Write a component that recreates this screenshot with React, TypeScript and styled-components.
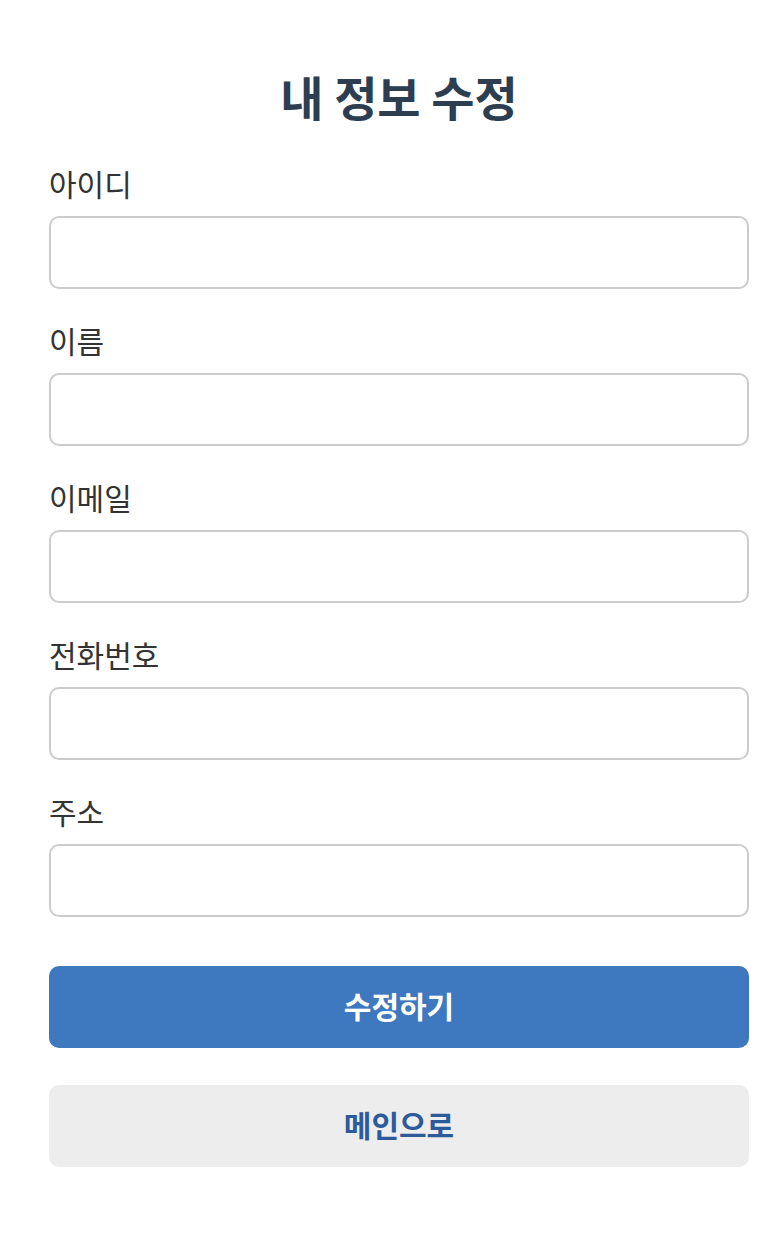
import { FC } from 'react';
import styled, { createGlobalStyle } from 'styled-components';

const GlobalStyle = createGlobalStyle`
  body {
    margin: 0;
    background: #fff;
    font-family: 'Noto Sans CJK KR', 'Noto Sans', sans-serif;
  }
`;

const Page = styled.div`
  padding: 66px 35px 60px 49px;
`;

const Form = styled.form`
  width: 700px;
  display: flex;
  flex-direction: column;
`;

const Title = styled.h1`
  margin: 0 0 38px;
  text-align: center;
  font-size: 47px;
  line-height: 60px;
  font-weight: 700;
  color: #2c3e50;
`;

const Field = styled.div`
  display: flex;
  flex-direction: column;
  gap: 14px;
  margin-bottom: 32px;
`;

const Label = styled.label`
  font-size: 30px;
  line-height: 38px;
  color: #333;
`;

const Input = styled.input`
  box-sizing: border-box;
  height: 73px;
  width: 100%;
  border: 2px solid #ccc;
  border-radius: 10px;
  padding: 0 16px;
  font-size: 28px;
  font-family: inherit;
  outline: none;
`;

const Button = styled.button<{ $primary?: boolean }>`
  height: 82px;
  width: 100%;
  padding: 0 0 5px;
  border: none;
  border-radius: 10px;
  font-family: inherit;
  font-size: 30px;
  font-weight: 700;
  cursor: pointer;
  background: ${({ $primary }) => ($primary ? '#3e78be' : '#ededed')};
  color: ${({ $primary }) => ($primary ? '#fff' : '#2c5a9a')};
  margin-top: ${({ $primary }) => ($primary ? '17px' : '37px')};
`;

const fields = [
  { id: 'userId', label: '아이디' },
  { id: 'name', label: '이름' },
  { id: 'email', label: '이메일' },
  { id: 'phone', label: '전화번호' },
  { id: 'address', label: '주소' },
];

const App: FC = () => {
  return (
    <>
      <GlobalStyle />
      <Page>
        <Form onSubmit={(e) => e.preventDefault()}>
          <Title>내 정보 수정</Title>
          {fields.map((field) => (
            <Field key={field.id}>
              <Label htmlFor={field.id}>{field.label}</Label>
              <Input id={field.id} type="text" />
            </Field>
          ))}
          <Button type="submit" $primary>
            수정하기
          </Button>
          <Button type="button">메인으로</Button>
        </Form>
      </Page>
    </>
  );
};

export default App;
